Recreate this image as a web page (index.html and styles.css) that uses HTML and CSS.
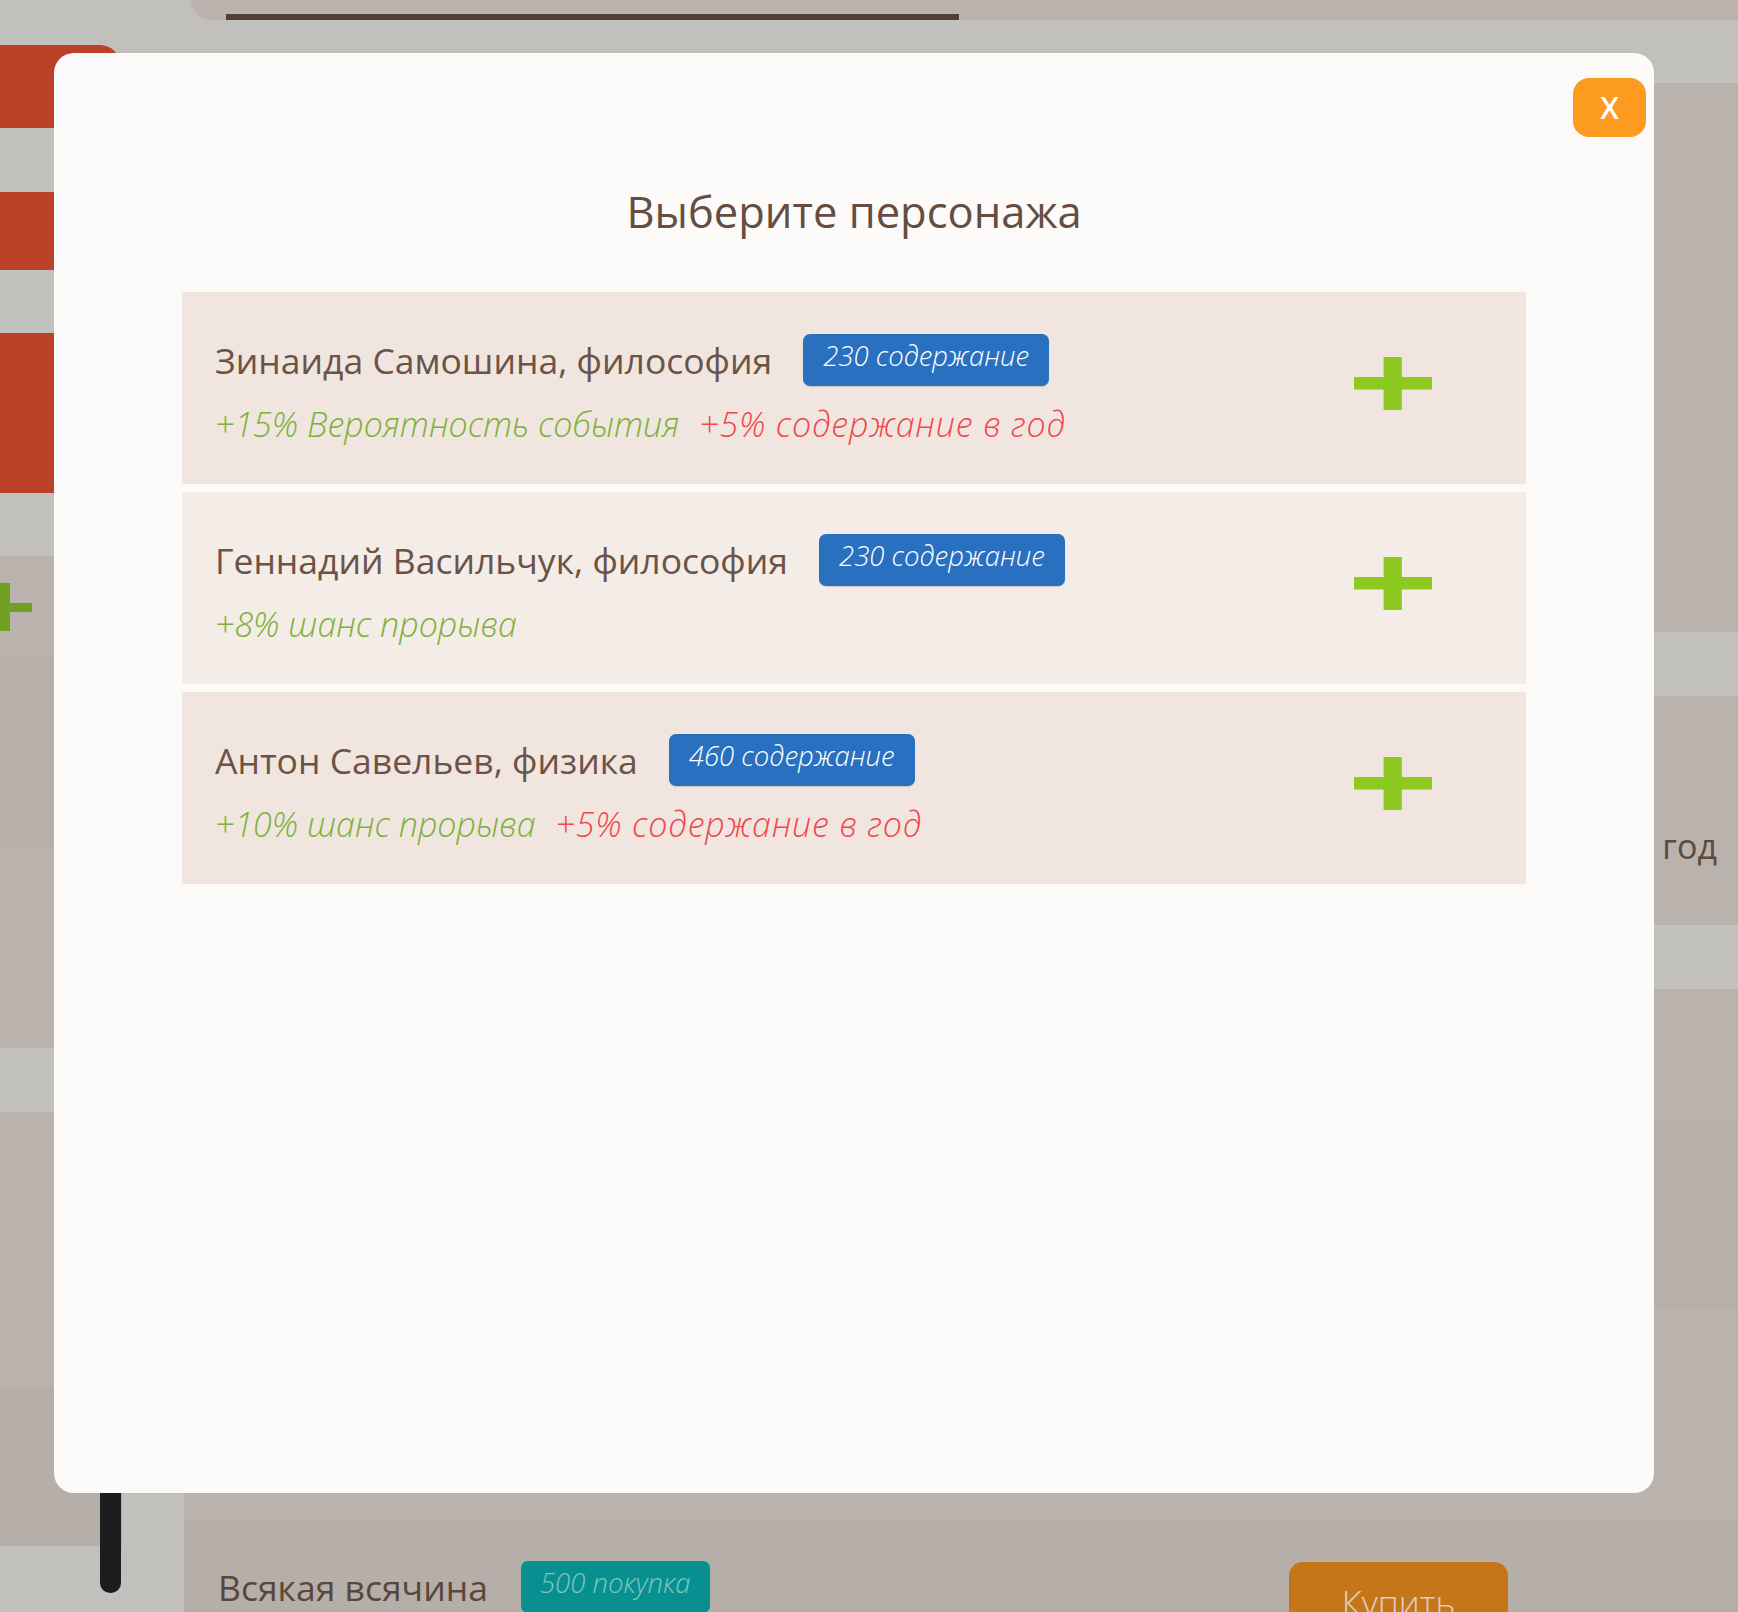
FILE: index.html
```html
<!DOCTYPE html>
<html lang="ru">
<head>
<meta charset="utf-8">
<title>Выберите персонажа</title>
<link rel="stylesheet" href="styles.css">
</head>
<body>
<div class="app">
  <header class="topbar"><div class="progress"></div></header>
  <div class="layout">
    <aside class="sidebar">
      <div class="tab tab-1"></div>
      <div class="tab tab-2"></div>
      <div class="tab tab-3"></div>
      <div class="side-list">
        <div class="side-item s1">
          <svg class="side-plus" width="32" height="48" viewBox="0 0 32 48"><rect x="0" y="20" width="32" height="9"/><rect x="0" y="0" width="10" height="48"/></svg>
        </div>
        <div class="side-item s2"></div>
        <div class="side-item s3"></div>
      </div>
      <div class="side-list">
        <div class="side-item s4"></div>
        <div class="side-item s5"></div>
        <div class="side-item s6"></div>
      </div>
      <div class="scroll-thumb"></div>
    </aside>
    <div class="gutter"></div>
    <main class="main">
      <section class="card c1"></section>
      <section class="card c2">
        <div class="bg-row year-row"><span class="bg-text">год</span></div>
      </section>
      <section class="card c3">
        <div class="bg-row r1"></div>
        <div class="bg-row r2"></div>
        <div class="bg-row r3"></div>
        <div class="bg-row r4 shop-row">
          <span class="shop-name">Всякая всячина</span>
          <span class="shop-badge">500 покупка</span>
          <button class="buy">Купить</button>
        </div>
      </section>
    </main>
  </div>
</div>

<div class="overlay">
  <div class="modal">
    <button class="close">X</button>
    <h1 class="modal-title">Выберите персонажа</h1>
    <ul class="char-list">
      <li class="char">
        <div class="char-info">
          <div class="char-head"><span class="char-name">Зинаида Самошина, философия</span><span class="cost">230 содержание</span></div>
          <div class="char-stats"><span class="pos">+15% Вероятность события</span><span class="neg">+5% содержание в год</span></div>
        </div>
        <svg class="add" width="78" height="53" viewBox="0 0 78 53"><rect x="0" y="20" width="78" height="12.5"/><rect x="29.6" y="0" width="18.2" height="53"/></svg>
      </li>
      <li class="char">
        <div class="char-info">
          <div class="char-head"><span class="char-name">Геннадий Васильчук, философия</span><span class="cost">230 содержание</span></div>
          <div class="char-stats"><span class="pos">+8% шанс прорыва</span></div>
        </div>
        <svg class="add" width="78" height="53" viewBox="0 0 78 53"><rect x="0" y="20" width="78" height="12.5"/><rect x="29.6" y="0" width="18.2" height="53"/></svg>
      </li>
      <li class="char">
        <div class="char-info">
          <div class="char-head"><span class="char-name">Антон Савельев, физика</span><span class="cost">460 содержание</span></div>
          <div class="char-stats"><span class="pos">+10% шанс прорыва</span><span class="neg">+5% содержание в год</span></div>
        </div>
        <svg class="add" width="78" height="53" viewBox="0 0 78 53"><rect x="0" y="20" width="78" height="12.5"/><rect x="29.6" y="0" width="18.2" height="53"/></svg>
      </li>
    </ul>
  </div>
</div>
</body>
</html>
```

FILE: styles.css
```css
* { box-sizing: border-box; }

html, body {
  margin: 0;
  padding: 0;
}

body {
  width: 1738px;
  height: 1612px;
  overflow: hidden;
  background: #c1c0bd;
  font-family: "Open Sans", "Noto Sans", "DejaVu Sans", sans-serif;
  color: #6c5347;
}

/* ---------- background page (dimmed) ---------- */
.topbar {
  height: 20px;
  margin-left: 191px;
  padding: 14px 0 0 35px;
  background: #bcb3ae;
  border-bottom-left-radius: 28px;
}

.progress {
  width: 733px;
  height: 6px;
  background: #523f36;
}

.layout {
  display: flex;
  height: 1592px;
  overflow: hidden;
}

.sidebar {
  position: relative;
  width: 122px;
  flex-shrink: 0;
  display: flex;
  flex-direction: column;
  padding-top: 25px;
}

.tab {
  width: 120px;
  flex-shrink: 0;
  background: #bb4129;
  border-radius: 0 20px 20px 0;
}
.tab-1 { height: 83px; margin-bottom: 64px; }
.tab-2 { height: 78px; margin-bottom: 63px; }
.tab-3 { height: 160px; margin-bottom: 63px; }

.side-list {
  display: flex;
  flex-direction: column;
  flex-shrink: 0;
  margin-bottom: 64px;
}
.side-list:last-of-type { margin-bottom: 0; flex: 1; }

.side-item { width: 122px; flex-shrink: 0; }
.s1 { height: 100px; background: #bab2ad; padding-top: 27px; }
.s2 { height: 192px; background: #b7afaa; }
.s3 { height: 200px; background: #bab2ad; }
.s4 { height: 274px; background: #bab2ad; }
.s5 { height: 160px; background: #b6aea9; }
.s6 { flex: 1; background: #bbb3ae; }

.side-plus { display: block; fill: #6fa021; }

.scroll-thumb {
  position: absolute;
  right: 1px;
  bottom: 19px;
  width: 21px;
  height: 320px;
  border-radius: 10px;
  background: #1c1b1e;
}

.gutter {
  width: 62px;
  flex-shrink: 0;
}

.main {
  flex: 1;
  display: flex;
  flex-direction: column;
  padding-top: 63px;
}

.card { background: #bab2ad; flex-shrink: 0; }
.c1 { height: 549px; margin-bottom: 64px; }
.c2 { height: 229px; margin-bottom: 64px; }
.c3 { display: flex; flex-direction: column; }

.year-row {
  display: flex;
  justify-content: flex-end;
  padding: 130px 21px 0 0;
}

.bg-text {
  font-size: 34px;
  line-height: 40px;
  color: #5e493e;
}

.bg-row { flex-shrink: 0; }
.r1 { height: 130px; background: #bab2ad; }
.r2 { height: 191px; background: #b7afaa; }
.r3 { height: 209px; background: #bab2ad; }
.r4 { height: 140px; background: #b6aea9; }

.shop-row {
  display: flex;
  align-items: flex-start;
  padding: 42px 0 0 34px;
}

.shop-name {
  font-size: 35.5px;
  line-height: 52px;
  color: #5b463b;
  margin-right: 33px;
}

.shop-badge {
  height: 52px;
  padding: 6px 19px 0;
  border-radius: 7px;
  background: #07908f;
  color: #7dc6c2;
  font-size: 27.5px;
  line-height: 32px;
  font-style: italic;
  font-weight: 300;
}

.buy {
  margin: 1px 230px 0 auto;
  width: 219px;
  height: 70px;
  padding: 12px 0 0;
  border: none;
  border-radius: 14px;
  background: #c47619;
  color: #d8cec5;
  font-family: inherit;
  font-size: 35px;
  line-height: 48px;
  font-weight: 300;
  text-align: center;
  vertical-align: top;
}

/* ---------- modal ---------- */
.overlay {
  position: fixed;
  inset: 0;
  padding: 53px 84px 119px 54px;
}

.modal {
  position: relative;
  width: 100%;
  height: 100%;
  padding: 129px 128px 0;
  background: #fcfbf9;
  border-radius: 20px;
}

.close {
  position: absolute;
  top: 25px;
  right: 8px;
  width: 73px;
  height: 59px;
  padding: 0;
  border: none;
  border-radius: 16px;
  background: #fd9b21;
  color: #ffffff;
  font-family: inherit;
  font-size: 30px;
  font-weight: 600;
  line-height: 59px;
  text-align: center;
}

.modal-title {
  margin: 0 0 50px;
  font-size: 43.5px;
  line-height: 60px;
  font-weight: 500;
  text-align: center;
  color: #654d42;
}

.char-list {
  list-style: none;
  margin: 0;
  padding: 0;
  display: flex;
  flex-direction: column;
  gap: 8px;
}

.char {
  display: flex;
  padding: 42px 0 40px 33px;
  background: #f0e6df;
}
.char:nth-child(2) { background: #f4ece6; }

.char-info { flex: 1; }

.char-head {
  display: flex;
  align-items: center;
  gap: 31px;
  height: 52px;
}

.char-name {
  font-size: 35.5px;
  line-height: 52px;
  color: #6c5347;
  white-space: nowrap;
}

.cost {
  height: 52px;
  padding: 6px 20px 0;
  border-radius: 7px;
  background: #2a70c0;
  box-shadow: 0 1px 1px rgba(0, 0, 0, 0.15);
  color: #ffffff;
  font-size: 27.5px;
  line-height: 32px;
  font-style: italic;
  font-weight: 300;
  white-space: nowrap;
}

.char-stats {
  margin-top: 18px;
  font-size: 34px;
  line-height: 40px;
  font-style: italic;
  font-weight: 300;
  white-space: nowrap;
}

.pos { color: #7db13a; margin-right: 20px; }
.neg { color: #f0464e; letter-spacing: 0.8px; }

.add {
  flex-shrink: 0;
  margin: 23px 94px 0 0;
  fill: #8cc921;
}
```
